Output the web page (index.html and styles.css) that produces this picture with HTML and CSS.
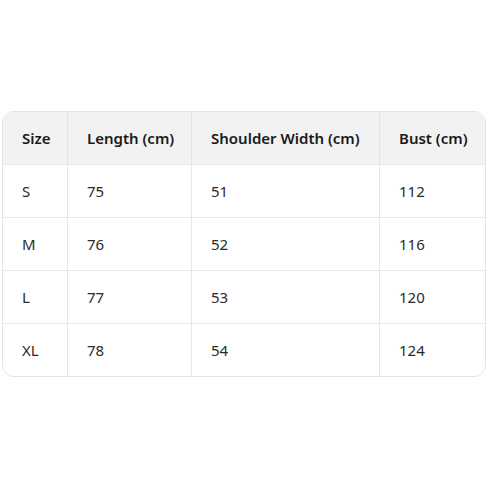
FILE: index.html
```html
<!DOCTYPE html>
<html>
<head>
<meta charset="utf-8">
<link rel="stylesheet" href="styles.css">
</head>
<body>
<div class="wrap">
  <table class="size-table">
    <colgroup>
      <col class="c1"><col class="c2"><col class="c3"><col class="c4">
    </colgroup>
    <thead>
      <tr><th>Size</th><th>Length (cm)</th><th>Shoulder Width (cm)</th><th>Bust (cm)</th></tr>
    </thead>
    <tbody>
      <tr><td>S</td><td>75</td><td>51</td><td>112</td></tr>
      <tr><td>M</td><td>76</td><td>52</td><td>116</td></tr>
      <tr><td>L</td><td>77</td><td>53</td><td>120</td></tr>
      <tr><td>XL</td><td>78</td><td>54</td><td>124</td></tr>
    </tbody>
  </table>
</div>
</body>
</html>
```
FILE: styles.css
```css
html, body {
  margin: 0;
  padding: 0;
  background: #ffffff;
}
body {
  font-family: "Noto Sans", "Open Sans", sans-serif;
  color: #222222;
}
.wrap {
  height: 489px;
  box-sizing: border-box;
  padding: 0 2px 2px 2px;
  display: flex;
  align-items: center;
  justify-content: flex-start;
}
.size-table {
  width: 484px;
  border-collapse: separate;
  border-spacing: 0;
  table-layout: fixed;
  border: 1px solid #e3e3e3;
  border-radius: 12px;
  overflow: hidden;
  font-size: 15px;
}
.c1 { width: 65px; }
.c2 { width: 124px; }
.c3 { width: 188px; }
.c4 { width: auto; }
.size-table th,
.size-table td {
  height: 52px;
  padding: 0 0 0 19px;
  text-align: left;
  vertical-align: middle;
  border-bottom: 1px solid #e6e6e6;
  border-right: 1px solid #e6e6e6;
  white-space: nowrap;
}
.size-table th:last-child,
.size-table td:last-child { border-right: none; }
.size-table tbody tr:last-child td { border-bottom: none; }
.size-table th {
  background: #f2f2f2;
  font-weight: 600;
  color: #1a1a1a;
}
.size-table td {
  font-weight: 400;
  color: #2a2a2a;
}
```
